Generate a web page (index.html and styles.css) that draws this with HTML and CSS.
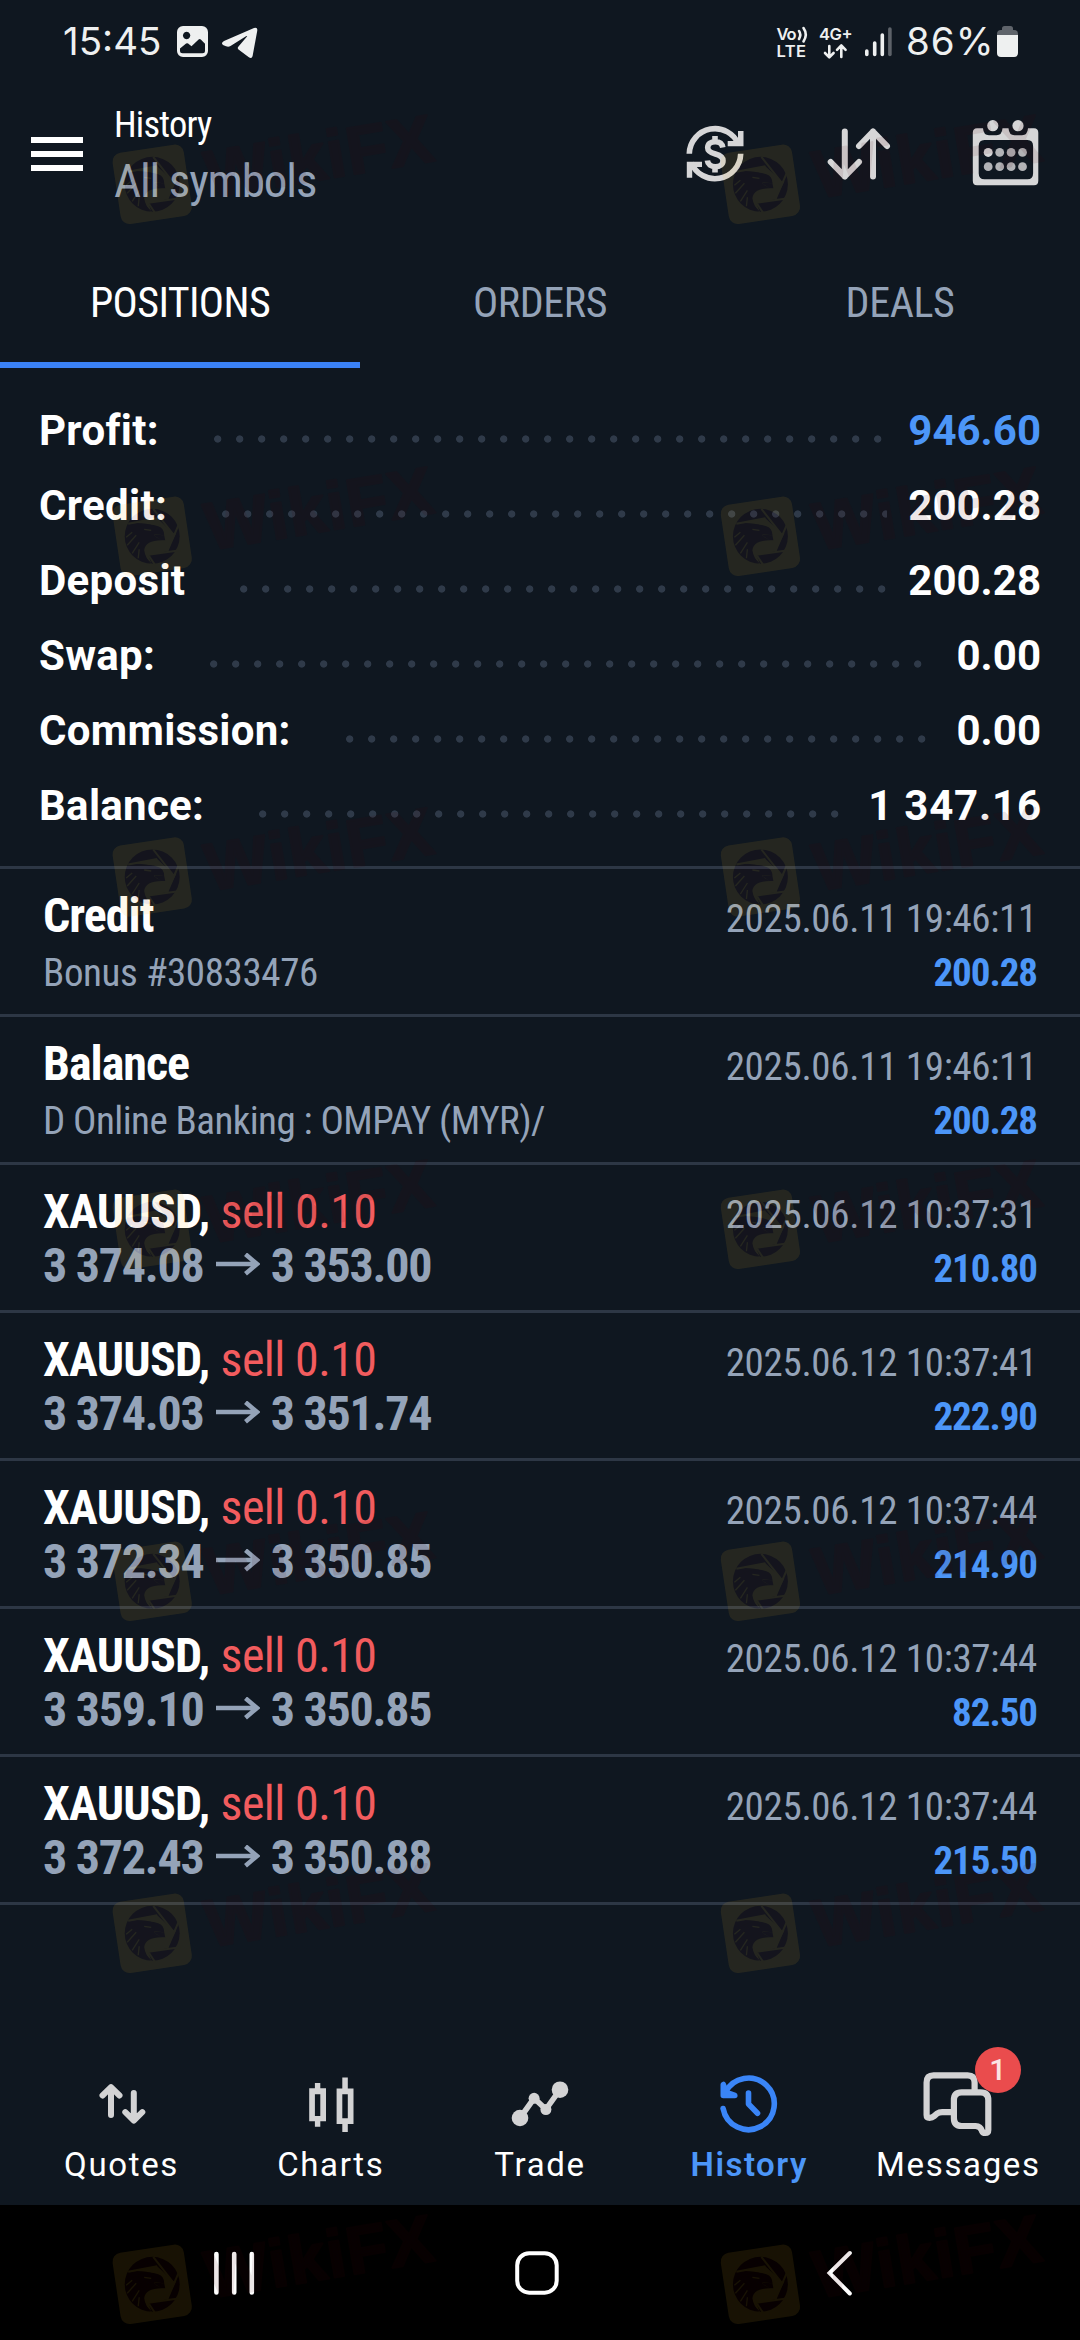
FILE: index.html
```html
<!DOCTYPE html>
<html lang="en">
<head>
<meta charset="utf-8">
<title>History</title>
<link rel="stylesheet" href="styles.css">
</head>
<body>
<div class="screen">
  <div class="statusbar">
    <span class="clock">15:45</span>
    <svg class="notif" width="82" height="40" viewBox="177 22 82 40">
      <path fill="#eef0f0" fill-rule="evenodd" d="M183 26h19a6 6 0 0 1 6 6v19a6 6 0 0 1-6 6h-19a6 6 0 0 1-6-6V32a6 6 0 0 1 6-6zM186.600 31.800a3.700 3.700 0 1 0 .01 0zM180 48.500v2.300q0 2.500 2.500 2.500h20q2.500 0 2.500-2.500V43.800l-4.200-4.300q-1.100-.9-2.200 0L191.500 46.300l-3.400-2.800q-1-.7-2 .1z"/>
      <path fill="#eef0f0" d="M224 41L254 28Q258 27 257.200 31L252.600 56Q251.800 59.500 248.500 57L238.500 49.500Q237 48 238.500 46.500L247 36.500Q247.500 35.500 246 36.300L230.500 46Q228.500 47.200 226 46.300L223 45Q220.500 43 224 41z"/>
    </svg>
    <svg class="radio" width="118" height="40" viewBox="775 22 118 40">
      <g class="radio-text">
        <text x="776.500" y="40" textLength="20">Vo</text>
        <text x="776.500" y="57.300" textLength="29.500">LTE</text>
        <text x="819" y="40" textLength="33.500">4G+</text>
      </g>
      <g fill="none" stroke="#eef0f0" stroke-width="2.600" stroke-linecap="round" stroke-linejoin="round">
        <path d="M799 31q2.600 3.500 0 8M803.500 28q4.500 6.500 0 13.500"/>
        <path d="M829.300 46v11M825 53l4.300 4.400 4.300-4.400M841.300 57V46M837 49.800l4.300-4.400 4.300 4.400"/>
      </g>
      <path stroke="#eef0f0" stroke-width="3.600" stroke-linecap="round" d="M866.800 51v3.500M874.700 43v11.500M882.300 35v19.500"/>
      <path stroke="#5d6269" stroke-width="3.600" stroke-linecap="round" d="M889.900 29v25.500"/>
    </svg>
    <span class="percent">86%</span>
    <svg class="battery" width="22" height="40" viewBox="997 22 22 40">
      <path fill="#5f646b" d="M997 36v-2q0-4 4-4h1v-1.500q0-2.500 2.500-2.500h6q2.500 0 2.500 2.500V30h1q4 0 4 4v2z"/>
      <path fill="#eef0f0" d="M997 35h21v18q0 4-4 4h-13q-4 0-4-4z"/>
    </svg>
  </div>

  <header class="header">
    <svg class="menu" width="52" height="34" viewBox="0 0 52 34"><path fill="#fff" d="M0 0h52v6H0zM0 14h52v6H0zM0 28h52v6H0z"/></svg>
    <div class="heading">
      <h1 class="title">History</h1>
      <span class="subtitle">All symbols</span>
    </div>
    <div class="actions">
      <svg width="62" height="68" viewBox="684 120 62 68">
        <g fill="none" stroke="#d6d6d7" stroke-width="5.600">
          <path d="M689.300 153.700a25.700 25.700 0 0 1 49.500-9M740.700 153.700a25.700 25.700 0 0 1-49.500 9"/>
          <path d="M722.800 147.500c-.6-4-3.600-5.800-7.500-5.800-4.500 0-7.600 2.300-7.600 6 0 3.400 2.700 4.900 7.700 6.300s7.600 3.100 7.600 6.700-3.200 6-7.600 6-7.600-2.200-8-6.200M715 136v6M715 166.500v6"/>
        </g>
        <path fill="#d6d6d7" d="M743.500 131v15.300h-15.800v-5.300h7.300l3-2.500V131zM686.800 177.700v-16h15.200v5.300h-7l-2.800 3v7.700z"/>
      </svg>
      <svg width="70" height="68" viewBox="826 120 70 68">
        <path fill="none" stroke="#d6d6d7" stroke-width="6" stroke-linecap="round" stroke-linejoin="round" d="M846.800 131.500v45M832.700 162l14.100 14.500L861 162M875 176.500v-45M861 146l14-14.500 14 14.500"/>
      </svg>
      <svg width="68" height="68" viewBox="972 120 68 68">
        <path fill="#d6d6d7" fill-rule="evenodd" d="M977 128.300h6q.5 7 6 7h7.500q5.500 0 6-7h6q.5 7 6 7h7.500q5.500 0 6-7h6q4.300 0 4.300 4.500v48q0 4.500-4.300 4.500h-57q-4.200 0-4.200-4.500v-48q0-4.500 4.200-4.500zM984.500 140q-5.800 0-5.800 6v27.300q0 6 5.800 6h43q5.600 0 5.600-6V146q0-6-5.600-6z"/>
        <g fill="#d6d6d7"><circle cx="992.800" cy="125.700" r="5.600"/><circle cx="1018" cy="125.700" r="5.600"/><circle cx="988.200" cy="152.400" r="4.500"/></g>
        <g fill="#b2b3b6"><circle cx="999.700" cy="152.400" r="4.400"/><circle cx="1011.100" cy="152.400" r="4.400"/><circle cx="1022.500" cy="152.400" r="4.400"/><circle cx="988.200" cy="166.700" r="4.400"/><circle cx="999.700" cy="166.700" r="4.400"/><circle cx="1011.100" cy="166.700" r="4.400"/><circle cx="1022.500" cy="166.700" r="4.400"/></g>
      </svg>
    </div>
  </header>

  <nav class="tabs">
    <span class="tab tab-active">POSITIONS</span>
    <span class="tab">ORDERS</span>
    <span class="tab">DEALS</span>
  </nav>

  <section class="summary">
    <div class="total"><span class="label">Profit:</span><i class="dots"></i><span class="blue">946.60</span></div>
    <div class="total"><span class="label">Credit:</span><i class="dots"></i><span>200.28</span></div>
    <div class="total"><span class="label">Deposit</span><i class="dots"></i><span>200.28</span></div>
    <div class="total"><span class="label">Swap:</span><i class="dots"></i><span>0.00</span></div>
    <div class="total"><span class="label">Commission:</span><i class="dots"></i><span>0.00</span></div>
    <div class="total"><span class="label">Balance:</span><i class="dots"></i><span class="sum">1 347.16</span></div>
  </section>

  <main class="list">
    <article class="deal">
      <div class="line"><b class="name">Credit</b><time class="date">2025.06.11 19:46:11</time></div>
      <div class="line"><span class="note">Bonus #30833476</span><b class="value">200.28</b></div>
    </article>
    <article class="deal">
      <div class="line"><b class="name">Balance</b><time class="date">2025.06.11 19:46:11</time></div>
      <div class="line"><span class="note note-long">D Online Banking : OMPAY (MYR)/</span><b class="value">200.28</b></div>
    </article>
    <article class="deal">
      <div class="line"><b class="symbol">XAUUSD,</b><span class="side">sell 0.10</span><time class="date">2025.06.12 10:37:31</time></div>
      <div class="line"><b class="price">3 374.08</b><svg class="arrow" width="44" height="29" viewBox="0 0 44 29"><use href="#arrow"/></svg><b class="price">3 353.00</b><b class="value">210.80</b></div>
    </article>
    <article class="deal">
      <div class="line"><b class="symbol">XAUUSD,</b><span class="side">sell 0.10</span><time class="date">2025.06.12 10:37:41</time></div>
      <div class="line"><b class="price">3 374.03</b><svg class="arrow" width="44" height="29" viewBox="0 0 44 29"><use href="#arrow"/></svg><b class="price">3 351.74</b><b class="value">222.90</b></div>
    </article>
    <article class="deal">
      <div class="line"><b class="symbol">XAUUSD,</b><span class="side">sell 0.10</span><time class="date">2025.06.12 10:37:44</time></div>
      <div class="line"><b class="price">3 372.34</b><svg class="arrow" width="44" height="29" viewBox="0 0 44 29"><use href="#arrow"/></svg><b class="price">3 350.85</b><b class="value">214.90</b></div>
    </article>
    <article class="deal">
      <div class="line"><b class="symbol">XAUUSD,</b><span class="side">sell 0.10</span><time class="date">2025.06.12 10:37:44</time></div>
      <div class="line"><b class="price">3 359.10</b><svg class="arrow" width="44" height="29" viewBox="0 0 44 29"><use href="#arrow"/></svg><b class="price">3 350.85</b><b class="value">82.50</b></div>
    </article>
    <article class="deal">
      <div class="line"><b class="symbol">XAUUSD,</b><span class="side">sell 0.10</span><time class="date">2025.06.12 10:37:44</time></div>
      <div class="line"><b class="price">3 372.43</b><svg class="arrow" width="44" height="29" viewBox="0 0 44 29"><use href="#arrow"/></svg><b class="price">3 350.88</b><b class="value">215.50</b></div>
    </article>
  </main>

  <nav class="bottom-nav">
    <div class="item">
      <svg width="80" height="95" viewBox="81.500 2045 80 95"><path fill="none" stroke="#d3d3d4" stroke-width="6" stroke-linecap="round" stroke-linejoin="round" d="M110.500 2115v-27M102 2095.500l8.500-8.300 8.500 8.300M133.300 2093v27M124.800 2112.200l8.500 8.300 8.500-8.300"/></svg>
      <span>Quotes</span>
    </div>
    <div class="item">
      <svg width="80" height="95" viewBox="290.700 2045 80 95"><path fill="#d3d3d4" fill-rule="evenodd" d="M314.600 2083h5.400v5.300h5.700v33h-5.700v5.500h-5.400v-5.500h-5.700v-33h5.700zm0 11.300v21.700h5.400v-21.700zM342 2077.500h5.500v11h5.700v35.500h-5.700v8H342v-8h-5.700v-35.500h5.700zm0 16.700v24h5.500v-24z"/></svg>
      <span>Charts</span>
    </div>
    <div class="item">
      <svg width="80" height="95" viewBox="500 2045 80 95"><g fill="#d3d3d4"><path fill="none" stroke="#d3d3d4" stroke-width="5.600" d="M520 2118l14.100-19.700 11.800 11 14.100-19.600"/><circle cx="520" cy="2118" r="8.300"/><circle cx="534.100" cy="2098.300" r="5.500"/><circle cx="545.900" cy="2109.500" r="5.500"/><circle cx="560" cy="2089.700" r="8.300"/></g></svg>
      <span>Trade</span>
    </div>
    <div class="item item-active">
      <svg width="80" height="95" viewBox="709.200 2045 80 95"><g fill="none" stroke="#3a85f7" stroke-width="5.600" stroke-linecap="round" stroke-linejoin="round"><path d="M725.500 2092.500a25.800 25.800 0 1 1-2.200 16M748.700 2093v11l9 9.200"/><path fill="#3a85f7" d="M723.500 2084.500v11h11.500l-8.500-3z"/></g></svg>
      <span>History</span>
    </div>
    <div class="item">
      <svg width="80" height="95" viewBox="918.400 2045 80 95"><g fill="none" stroke="#d3d3d4" stroke-width="6.200" stroke-linejoin="round"><path d="M975 2090v-7.500q0-7.200-7-7.200h-34q-7 0-7 7.200V2115q0 2.800 3 2.800 2.500 0 4.500-1.700l3-2.600q2-1.300 5-1.300H954"/><path d="M962 2092.300h19q7.700 0 7.700 7.700v30q0 3-3 3-2.500 0-3.300-2-1.400-4.800-6.400-5h-14q-7.700 0-7.700-8v-18q0-7.700 7.700-7.700z"/></g></svg>
      <span>Messages</span>
      <b class="badge">1</b>
    </div>
  </nav>

  <footer class="system-nav">
    <svg width="64" height="56" viewBox="202 2247 64 56"><path stroke="#fff" stroke-width="4.600" stroke-linecap="round" d="M216.400 2256v38.500M234.200 2256v38.500M251.800 2256v38.500"/></svg>
    <svg width="64" height="56" viewBox="504 2247 64 56"><rect x="516.200" y="2255.200" width="39.500" height="39.500" rx="12" fill="none" stroke="#fff" stroke-width="4"/></svg>
    <svg width="64" height="56" viewBox="808 2247 64 56"><path fill="none" stroke="#fff" stroke-width="4" stroke-linecap="round" d="M849.800 2255l-20.300 20 20.300 20.500"/></svg>
  </footer>

  <svg class="watermarks" width="1080" height="2340" viewBox="0 0 1080 2340">
    <defs>
      <g id="arrow"><path fill="none" stroke="#94a3b8" stroke-width="4.500" d="M0 11h41M29.500 1.200L41 11 29.500 20.800"/></g>
      <g id="mark">
        <rect x="-36" y="-36" width="72" height="72" rx="9" fill="#f0b928" transform="rotate(-8.500)"/>
        <circle r="27.500" fill="#46050a"/>
        <path fill="none" stroke="#f0b928" stroke-width="2" d="M-24-12.500L5-18M1-27.500L21-2M27-13L15 15M28 14L-4 18.500M-4 18.500L3 29"/>
        <path fill="#f0b928" d="M9 4L6.500 2.500Q-1-1 3-7L-4-8 2-5.500 12-1 13 4Q-7 3-8 14-7 22 0 29L-4 19 15 15 24-3 21-3 5-18-22-13Q4-15 12-2L11-1-1-2Q2-1 9 4z"/>
        <path fill="#46050a" d="M-25-3Q-8-16 6-10 12-8 12-1L2-2Q1 1 8 3-11 4-9 15-7 23 0 27-18 25-25-3z"/>
        <path fill="none" stroke="#f0b928" stroke-width="1.300" d="M-26 1l6-5M-25 9l9-10M-20 17l7-11M-14 22l1-9M-8-7l7 1"/>
        <text class="mark-text" x="57" y="14" textLength="230" transform="rotate(-9.500 57 14)">WikiFX</text>
      </g>
      <g id="pair"><use href="#mark" x="152.200"/><use href="#mark" x="760.400"/></g>
    </defs>
    <g opacity="0.100">
      <use href="#pair" y="184.300"/>
      <use href="#pair" y="536.300"/>
      <use href="#pair" y="877"/>
      <use href="#pair" y="1229.300"/>
      <use href="#pair" y="1581.300"/>
      <use href="#pair" y="1933.300"/>
      <use href="#pair" y="2284.300"/>
    </g>
  </svg>
</div>
</body>
</html>
```
FILE: styles.css
```css
* { box-sizing: border-box; }

body {
  margin: 0;
  background: #0f1720;
  color: #fff;
  font-family: Roboto, sans-serif;
}

svg { display: block; flex: none; }

.screen {
  position: relative;
  display: flex;
  flex-direction: column;
  width: 1080px;
  height: 2340px;
  overflow: hidden;
}

/* Status bar */
.statusbar {
  display: flex;
  align-items: center;
  height: 84px;
  padding: 0 61px 0 63px;
  color: #eef0f0;
  font: 400 38.5px/82px Inter, sans-serif;
}
.clock { width: 114px; height: 84px; }
.radio { margin-left: auto; }
.radio-text { font: 600 16.5px Inter, sans-serif; fill: #eef0f0; }
.percent { width: 91px; margin-left: 13px; height: 84px; letter-spacing: 1px; }

/* Header */
.header {
  display: flex;
  align-items: center;
  height: 140px;
  padding: 0 40px 0 31px;
}
.heading {
  display: flex;
  flex-direction: column;
  gap: 2px;
  margin-left: 31px;
  padding-top: 2px;
  font-family: "Roboto Condensed", Roboto, sans-serif;
}
.title { margin: 0; font-size: 36.5px; font-weight: 400; line-height: 50px; letter-spacing: -0.8px; }
.subtitle { color: #94a3b8; font-size: 47px; line-height: 58px; letter-spacing: -1.15px; }
.actions { display: flex; justify-content: space-between; width: 356px; margin-left: auto; }

/* Tabs */
.tabs { display: grid; grid-template-columns: repeat(3, 1fr); height: 144px; }
.tab {
  display: flex;
  align-items: center;
  justify-content: center;
  padding-top: 18px;
  border-bottom: 6px solid transparent;
  color: #94a3b8;
  font: 400 42px "Roboto Condensed", Roboto, sans-serif;
  letter-spacing: -0.4px;
}
.tab-active { border-color: #3b82f6; color: #fff; letter-spacing: -0.6px; }

/* Account totals */
.summary { padding: 25px 39px 23px; font-weight: 700; font-size: 42px; }
.total { display: flex; align-items: center; height: 75px; line-height: 75px; }
.label { letter-spacing: 0.3px; }
.dots {
  flex: 1;
  height: 8px;
  margin: 17px 21px 0 55px;
  background: radial-gradient(circle at 3.7px 4px, #2f3a49 3.2px, transparent 4px) 0 0 / 22px 8px repeat-x;
}
.sum { letter-spacing: 0.8px; margin-right: -0.8px; }
.blue { color: #4c96f8; }

/* Deals */
.list {
  flex: 1;
  border-top: 3px solid #2d3745;
  font-family: "Roboto Condensed", Roboto, sans-serif;
}
.deal { height: 148px; padding: 20px 43px 0; border-bottom: 3px solid #2d3745; }
.line { display: flex; align-items: baseline; height: 54px; font-size: 48px; line-height: 54px; white-space: nowrap; }
.name { letter-spacing: -1px; }
.symbol { letter-spacing: -0.75px; }
.side { margin-left: 11px; color: #f25c5e; letter-spacing: -0.6px; }
.price { color: #94a3b8; letter-spacing: -1.27px; }
.arrow { margin: 0 11px 0 12.4px; }
.date { margin-left: auto; color: #94a3b8; font-size: 39px; line-height: 60px; letter-spacing: -0.31px; }
.note { color: #94a3b8; font-size: 39px; line-height: 60px; letter-spacing: -0.39px; }
.note-long { letter-spacing: -0.56px; }
.value { margin-left: auto; color: #4c96f8; font-size: 39px; line-height: 60px; letter-spacing: -1.05px; }

/* Bottom navigation */
.bottom-nav { display: grid; grid-template-columns: repeat(5, 1fr); height: 160px; padding: 0 17px; }
.item {
  position: relative;
  display: flex;
  flex-direction: column;
  align-items: center;
  gap: 5px;
  font-size: 33px;
  line-height: 40px;
  letter-spacing: 1.65px;
}
.item-active { color: #4c96f8; font-weight: 600; letter-spacing: 1.5px; }
.badge {
  position: absolute;
  left: 121px;
  top: 2px;
  width: 46px;
  height: 46px;
  border-radius: 50%;
  background: #ea4c4d;
  color: #fbe3e3;
  font: 500 30px/46px Roboto, sans-serif;
  letter-spacing: 0;
  text-align: center;
}

/* System navigation */
.system-nav { display: flex; align-items: center; gap: 239px; height: 135px; padding-left: 202px; background: #000; }

.watermarks { position: absolute; inset: 0; pointer-events: none; }
.mark-text {
  font: 700 67px "Liberation Sans", sans-serif;
  fill: #46050a;
  stroke: #46050a;
  stroke-width: 2.5px;
  stroke-linejoin: round;
}
```
